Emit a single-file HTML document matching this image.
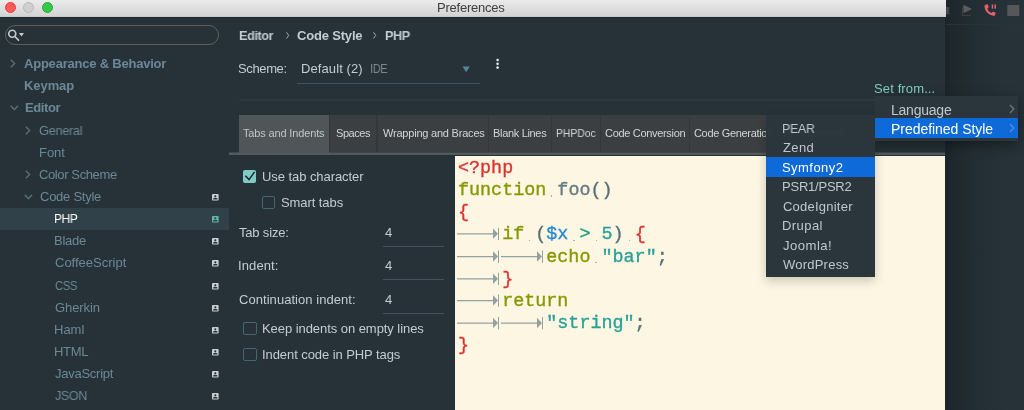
<!DOCTYPE html>
<html><head><meta charset="utf-8">
<style>
*{box-sizing:border-box;margin:0;padding:0}
html,body{width:1024px;height:410px;overflow:hidden;background:#263238}
body{font-family:"Liberation Sans",sans-serif;font-size:13px;color:#c3ccd1;position:relative}
.abs{position:absolute}
.x{position:absolute;line-height:16px;white-space:nowrap;will-change:transform}
#ide{left:944.500px;top:0;width:79.500px;height:410px;background:linear-gradient(to right,#1a2429 0,#1f292e 10px,#232e34 30px,#263238 62px)}
#win{left:0;top:0;width:944.500px;height:410px;background:#263238}
#title{left:0;top:0;width:945.700px;height:17.450px;background:linear-gradient(#ebebeb,#d4d4d4 92%,#c6c6c6);box-shadow:0 1px 0.500px #1f2a2f}
.tl{top:1.700px;width:11.200px;height:11.200px;border-radius:50%}
#search{left:4.600px;top:25.100px;width:214.600px;height:20.200px;border:1px solid #615f5d;border-radius:10px}
.ul{height:1px;background:#3f5560}
.tab{top:115px;height:37px;line-height:37px;font-size:11px;letter-spacing:-0.2px;color:#cdcfd0;background:#3c3f41;text-align:center;white-space:nowrap;overflow:hidden}
.cb{width:13.400px;height:12.700px;border:1.200px solid #47656e;border-radius:2px}
#prev{left:455px;top:155.5px;width:489.500px;height:254.5px;background:#fdf6e3;overflow:hidden}
#code{will-change:transform;position:absolute;left:2.5px;top:2.700px;font-family:"Liberation Mono",monospace;font-size:18.4px;line-height:22.150px;white-space:pre;color:#586e75;-webkit-text-stroke:0.35px currentColor}
.w{position:relative}.w:after{content:"";position:absolute;left:5px;bottom:4.500px;width:1.200px;height:1.200px;background:#a9b3b2}
.r{color:#dc322f}.g{color:#859900}.b{color:#268bd2}.c{color:#2aa198}.o{color:#1b9c78}.d{color:#657b83}
.pop{background:#2b363c;box-shadow:0 4px 12px rgba(0,0,0,.4)}
.sel{background:#0e6ad9}
</style></head><body>
<div class="abs" id="ide">
  <svg class="abs" style="left:0;top:0" width="79" height="30" viewBox="0 0 79 30">
    <rect x="1.200" y="7" width="2.400" height="7.400" fill="#4a4e50"/><rect x="3.600" y="7.300" width="1" height="1.400" fill="#44494b"/><rect x="3.600" y="10" width="1" height="1.400" fill="#44494b"/><rect x="3.600" y="12.700" width="1" height="1.400" fill="#44494b"/>
    <path d="M18.500 4.800 L27 9 L18.500 13.200 Z" fill="#5a5d5f"/><path d="M17.500 7.500 V15.500 H26" stroke="#3b4244" stroke-width="1" fill="none"/>
    <path transform="translate(0.400,0.900)" d="M39 4.500 c0 5 4 10 10 10.500 l1.500 -3 l-3 -1.500 l-1.500 1.500 c-2 -1 -3.500 -2.500 -4 -4.500 l1.500 -1.500 l-1.500 -3 z" fill="#e4606a"/>
    <rect x="46.700" y="4.500" width="1.500" height="4.200" fill="#e4606a"/><rect x="49.500" y="4.500" width="1.500" height="4.200" fill="#e4606a"/>
    <rect x="62.300" y="5" width="12" height="11" fill="#555759"/>
    <rect x="1" y="24" width="78" height="1" fill="#2a3334"/>
  </svg>
</div>
<div class="abs" id="win">
<div class="abs" id="title">
  <div class="abs tl" style="left:4.600px;background:#fc5b57;border:0.5px solid #e0443e"></div>
  <div class="abs tl" style="left:23.100px;background:#d0d0d0;border:0.5px solid #b8b8b8"></div>
  <div class="abs tl" style="left:41.600px;background:#34c84a;border:0.5px solid #2aa939"></div>
</div>
<div class="abs" id="search"></div>
<svg class="abs" style="left:7px;top:28px" width="18" height="14" viewBox="0 0 18 14">
  <circle cx="5.250" cy="5.750" r="3.500" fill="none" stroke="#c3c8ca" stroke-width="1.700"/>
  <path d="M7.900 8.500 L11.500 12.100" stroke="#c3c8ca" stroke-width="1.700" stroke-linecap="round"/>
  <path d="M11.900 4.900 h5.100 l-2.550 3.500 z" fill="#c3c8ca"/>
</svg>
<div class="abs" style="left:0;top:208px;width:228.500px;height:22.200px;background:#314149"></div>
<svg class="abs" style="left:10px;top:59.3px" width="6" height="9" viewBox="0 0 6 9"><path d="M0.800 0.700 L4.600 4.500 L0.800 8.300" stroke="#546c78" stroke-width="1.500" fill="none"/></svg>
<svg class="abs" style="left:9.7px;top:105.3px" width="9" height="6" viewBox="0 0 9 6"><path d="M0.700 0.800 L4.400 4.600 L8.100 0.800" stroke="#546c78" stroke-width="1.500" fill="none"/></svg>
<svg class="abs" style="left:25px;top:125.6px" width="6" height="9" viewBox="0 0 6 9"><path d="M0.800 0.700 L4.600 4.500 L0.800 8.300" stroke="#546c78" stroke-width="1.500" fill="none"/></svg>
<svg class="abs" style="left:25px;top:170px" width="6" height="9" viewBox="0 0 6 9"><path d="M0.800 0.700 L4.600 4.500 L0.800 8.300" stroke="#546c78" stroke-width="1.500" fill="none"/></svg>
<svg class="abs" style="left:24.2px;top:194.2px" width="9" height="6" viewBox="0 0 9 6"><path d="M0.700 0.800 L4.400 4.600 L8.100 0.800" stroke="#546c78" stroke-width="1.500" fill="none"/></svg>
<svg class="abs" style="left:211.500px;top:193.90px" width="7" height="7" viewBox="0 0 7 7"><rect x="0" y="0" width="6.600" height="6.600" rx="0.800" fill="#c9cfd2"/><circle cx="3.300" cy="2.300" r="1.100" fill="#263238"/><path d="M1.100 5.600 V4.900 Q1.100 4 2.200 4 H4.400 Q5.500 4 5.500 4.900 V5.600 Z" fill="#263238"/></svg>
<svg class="abs" style="left:211.500px;top:216.05px" width="7" height="7" viewBox="0 0 7 7"><rect x="0" y="0" width="6.600" height="6.600" rx="0.800" fill="#62b5a4"/><circle cx="3.300" cy="2.300" r="1.100" fill="#314149"/><path d="M1.100 5.600 V4.900 Q1.100 4 2.200 4 H4.400 Q5.500 4 5.500 4.900 V5.600 Z" fill="#314149"/></svg>
<svg class="abs" style="left:211.500px;top:238.20px" width="7" height="7" viewBox="0 0 7 7"><rect x="0" y="0" width="6.600" height="6.600" rx="0.800" fill="#c9cfd2"/><circle cx="3.300" cy="2.300" r="1.100" fill="#263238"/><path d="M1.100 5.600 V4.900 Q1.100 4 2.200 4 H4.400 Q5.500 4 5.500 4.900 V5.600 Z" fill="#263238"/></svg>
<svg class="abs" style="left:211.500px;top:260.35px" width="7" height="7" viewBox="0 0 7 7"><rect x="0" y="0" width="6.600" height="6.600" rx="0.800" fill="#c9cfd2"/><circle cx="3.300" cy="2.300" r="1.100" fill="#263238"/><path d="M1.100 5.600 V4.900 Q1.100 4 2.200 4 H4.400 Q5.500 4 5.500 4.900 V5.600 Z" fill="#263238"/></svg>
<svg class="abs" style="left:211.500px;top:282.50px" width="7" height="7" viewBox="0 0 7 7"><rect x="0" y="0" width="6.600" height="6.600" rx="0.800" fill="#c9cfd2"/><circle cx="3.300" cy="2.300" r="1.100" fill="#263238"/><path d="M1.100 5.600 V4.900 Q1.100 4 2.200 4 H4.400 Q5.500 4 5.500 4.900 V5.600 Z" fill="#263238"/></svg>
<svg class="abs" style="left:211.500px;top:304.65px" width="7" height="7" viewBox="0 0 7 7"><rect x="0" y="0" width="6.600" height="6.600" rx="0.800" fill="#c9cfd2"/><circle cx="3.300" cy="2.300" r="1.100" fill="#263238"/><path d="M1.100 5.600 V4.900 Q1.100 4 2.200 4 H4.400 Q5.500 4 5.500 4.900 V5.600 Z" fill="#263238"/></svg>
<svg class="abs" style="left:211.500px;top:326.80px" width="7" height="7" viewBox="0 0 7 7"><rect x="0" y="0" width="6.600" height="6.600" rx="0.800" fill="#c9cfd2"/><circle cx="3.300" cy="2.300" r="1.100" fill="#263238"/><path d="M1.100 5.600 V4.900 Q1.100 4 2.200 4 H4.400 Q5.500 4 5.500 4.900 V5.600 Z" fill="#263238"/></svg>
<svg class="abs" style="left:211.500px;top:348.95px" width="7" height="7" viewBox="0 0 7 7"><rect x="0" y="0" width="6.600" height="6.600" rx="0.800" fill="#c9cfd2"/><circle cx="3.300" cy="2.300" r="1.100" fill="#263238"/><path d="M1.100 5.600 V4.900 Q1.100 4 2.200 4 H4.400 Q5.500 4 5.500 4.900 V5.600 Z" fill="#263238"/></svg>
<svg class="abs" style="left:211.500px;top:371.10px" width="7" height="7" viewBox="0 0 7 7"><rect x="0" y="0" width="6.600" height="6.600" rx="0.800" fill="#c9cfd2"/><circle cx="3.300" cy="2.300" r="1.100" fill="#263238"/><path d="M1.100 5.600 V4.900 Q1.100 4 2.200 4 H4.400 Q5.500 4 5.500 4.900 V5.600 Z" fill="#263238"/></svg>
<svg class="abs" style="left:211.500px;top:393.25px" width="7" height="7" viewBox="0 0 7 7"><rect x="0" y="0" width="6.600" height="6.600" rx="0.800" fill="#c9cfd2"/><circle cx="3.300" cy="2.300" r="1.100" fill="#263238"/><path d="M1.100 5.600 V4.900 Q1.100 4 2.200 4 H4.400 Q5.500 4 5.500 4.900 V5.600 Z" fill="#263238"/></svg>
<svg class="abs" style="left:285.500px;top:32.200px" width="4" height="7" viewBox="0 0 4 7"><path d="M0.500 0.300 L2.700 3.400 L0.500 6.500" stroke="#a3acb1" stroke-width="1" fill="none"/></svg>
<svg class="abs" style="left:372.900px;top:32.200px" width="4" height="7" viewBox="0 0 4 7"><path d="M0.500 0.300 L2.700 3.400 L0.500 6.500" stroke="#a3acb1" stroke-width="1" fill="none"/></svg>
<svg class="abs" style="left:462px;top:66px" width="9" height="7" viewBox="0 0 9 7"><path d="M0.500 0.400 H7.800 L4.150 6.200 Z" fill="#56859a"/></svg>
<div class="abs ul" style="left:297px;top:82.900px;width:183px;height:1.300px"></div>
<svg class="abs" style="left:495px;top:58px" width="5" height="12" viewBox="0 0 5 12"><circle cx="2.600" cy="2.050" r="1.300" fill="#e6e9ea"/><circle cx="2.600" cy="5.850" r="1.300" fill="#e6e9ea"/><circle cx="2.600" cy="9.600" r="1.300" fill="#e6e9ea"/></svg>
<div class="abs" style="left:239px;top:99.300px;width:706px;height:1.300px;background:#2b393f"></div>

<div class="abs" style="left:229px;top:152px;width:716px;height:1px;background:#3d4649"></div><div class="abs" style="left:229px;top:153px;width:716px;height:2px;background:#525a5d"></div>
<div class="abs" style="left:239px;top:115px;width:610px;height:37px;background:#33383a"></div>
<div class="abs tab" style="left:239px;width:89.800px;background:#505557;height:38px"></div>
<div class="abs tab" style="left:330px;width:46.300px"></div>
<div class="abs tab" style="left:377.800px;width:110.400px"></div>
<div class="abs tab" style="left:489px;width:62px"></div>
<div class="abs tab" style="left:552px;width:48px"></div>
<div class="abs tab" style="left:601px;width:88px"></div>
<div class="abs tab" style="left:690px;width:88px"></div>
<div class="abs tab" style="left:779px;width:70px"></div>


<div class="abs cb" style="left:243.300px;top:170.200px;width:13.200px;height:12.400px;background:#80cbc4;border-color:#80cbc4;border-radius:1.500px"></div>
<svg class="abs" style="left:243.400px;top:170.300px" width="14" height="13" viewBox="0 0 14 13"><path d="M2.400 5.800 L6 9.600 L11.600 1.900" stroke="#1e272c" stroke-width="1.500" fill="none"/></svg>
<div class="abs cb" style="left:261.700px;top:196px"></div>
<div class="abs ul" style="left:383px;top:245.600px;width:61px;height:1.300px"></div>
<div class="abs ul" style="left:383px;top:279.100px;width:61px;height:1.300px"></div>
<div class="abs ul" style="left:383px;top:312.600px;width:61px;height:1.300px"></div>
<div class="abs cb" style="left:243.300px;top:321.900px"></div>
<div class="abs cb" style="left:243.300px;top:348px"></div>

<div class="abs" id="prev">
<div id="code"><span class="r">&lt;?php</span>
<span class="g">function</span><span class="w"> </span><span class="d">foo</span>()
<span class="r">{</span>
    <span class="g">if</span><span class="w"> </span>(<span class="b">$x</span><span class="w"> </span><span class="o">&gt;</span><span class="w"> </span><span class="c">5</span>)<span class="w"> </span><span class="r">{</span>
        <span class="g">echo</span><span class="w"> </span><span class="c">"bar"</span>;
    <span class="r">}</span>
    <span class="g">return</span>
        <span class="c">"string"</span>;
<span class="r">}</span></div>
</div>
</div>
<span id="t0" class="x" style="left:242.90px;top:124.70px;font-size:11px;font-weight:normal;color:#c0c4c6;letter-spacing:-0.150px">Tabs and Indents</span>
<span id="t1" class="x" style="left:335.50px;top:124.70px;font-size:11px;font-weight:normal;color:#d2d4d5;letter-spacing:-0.432px">Spaces</span>
<span id="t2" class="x" style="left:383.00px;top:124.70px;font-size:11px;font-weight:normal;color:#d2d4d5;letter-spacing:-0.210px">Wrapping and Braces</span>
<span id="t3" class="x" style="left:493.04px;top:124.70px;font-size:11px;font-weight:normal;color:#d2d4d5;letter-spacing:-0.324px">Blank Lines</span>
<span id="t4" class="x" style="left:556.30px;top:124.70px;font-size:11px;font-weight:normal;color:#d2d4d5;letter-spacing:-0.018px;transform:scaleX(0.9450);transform-origin:0 50%">PHPDoc</span>
<span id="t5" class="x" style="left:604.60px;top:124.70px;font-size:11px;font-weight:normal;color:#d2d4d5;letter-spacing:-0.315px">Code Conversion</span>
<span id="t6" class="x" style="left:694.10px;top:124.70px;font-size:11px;font-weight:normal;color:#d2d4d5;letter-spacing:-0.330px">Code Generation</span>
<svg class="abs" style="left:455px;top:156px" width="120" height="254" viewBox="0 0 120 254">
<g transform="translate(2,78.3)"><path d="M0 -0.500 H37" stroke="#93a1a1" stroke-width="1.250"/><path d="M36 -5.800 L41 -0.500 L36 4.800 Z" fill="#93a1a1"/><path d="M41.500 -6.500 V5.800" stroke="#93a1a1" stroke-width="1"/></g>
<g transform="translate(2,101)"><path d="M0 -0.500 H37" stroke="#93a1a1" stroke-width="1.250"/><path d="M36 -5.800 L41 -0.500 L36 4.800 Z" fill="#93a1a1"/><path d="M41.500 -6.500 V5.800" stroke="#93a1a1" stroke-width="1"/></g>
<g transform="translate(46,101)"><path d="M0 -0.500 H37" stroke="#93a1a1" stroke-width="1.250"/><path d="M36 -5.800 L41 -0.500 L36 4.800 Z" fill="#93a1a1"/><path d="M41.500 -6.500 V5.800" stroke="#93a1a1" stroke-width="1"/></g>
<g transform="translate(2,123.25)"><path d="M0 -0.500 H37" stroke="#93a1a1" stroke-width="1.250"/><path d="M36 -5.800 L41 -0.500 L36 4.800 Z" fill="#93a1a1"/><path d="M41.500 -6.500 V5.800" stroke="#93a1a1" stroke-width="1"/></g>
<g transform="translate(2,145)"><path d="M0 -0.500 H37" stroke="#93a1a1" stroke-width="1.250"/><path d="M36 -5.800 L41 -0.500 L36 4.800 Z" fill="#93a1a1"/><path d="M41.500 -6.500 V5.800" stroke="#93a1a1" stroke-width="1"/></g>
<g transform="translate(2,167.5)"><path d="M0 -0.500 H37" stroke="#93a1a1" stroke-width="1.250"/><path d="M36 -5.800 L41 -0.500 L36 4.800 Z" fill="#93a1a1"/><path d="M41.500 -6.500 V5.800" stroke="#93a1a1" stroke-width="1"/></g>
<g transform="translate(46,167.5)"><path d="M0 -0.500 H37" stroke="#93a1a1" stroke-width="1.250"/><path d="M36 -5.800 L41 -0.500 L36 4.800 Z" fill="#93a1a1"/><path d="M41.500 -6.500 V5.800" stroke="#93a1a1" stroke-width="1"/></g>
</svg>
<div class="abs" style="left:746px;top:95px;width:160px;height:215px">
<div class="abs pop" style="left:20px;top:20px;width:109.200px;height:162.200px;box-shadow:0 4px 10px rgba(0,0,0,.2)">
  <div class="abs" style="left:1.500px;top:12px;font-size:11px;color:#2f3a40;letter-spacing:-0.2px;white-space:nowrap">n</div><div class="abs" style="left:17.500px;top:12px;font-size:11px;color:#303b41;letter-spacing:-0.2px;white-space:nowrap">Arrangement</div>
  <div class="abs sel" style="left:0;top:42.100px;width:109px;height:19.700px"></div>
</div></div>
<div class="abs" style="left:875px;top:75px;width:149px;height:95px;overflow:hidden">
<div class="abs pop" style="left:0;top:20.500px;width:143px;height:45.500px">
  <div class="abs sel" style="left:0;top:22.500px;width:143px;height:19.500px"></div>
  <svg style="position:absolute;left:134px;top:8.500px" width="6" height="10" viewBox="0 0 6 10"><path d="M1 1 L4.800 5 L1 9" stroke="#6a777d" stroke-width="1.300" fill="none"/></svg>
  <svg style="position:absolute;left:134px;top:27.500px" width="6" height="10" viewBox="0 0 6 10"><path d="M1 1 L4.800 5 L1 9" stroke="#4f90ea" stroke-width="1.300" fill="none"/></svg>
</div></div>
<span id="sb0" class="x" style="left:23.70px;top:56.10px;font-size:13px;font-weight:bold;color:#6c8896;letter-spacing:-0.216px">Appearance &amp; Behavior</span>
<span id="sb1" class="x" style="left:24.22px;top:78.25px;font-size:13px;font-weight:bold;color:#6c8896;letter-spacing:-0.072px">Keymap</span>
<span id="sb2" class="x" style="left:24.78px;top:100.40px;font-size:13px;font-weight:bold;color:#6c8896;letter-spacing:-0.414px">Editor</span>
<span id="sb3" class="x" style="left:39.28px;top:122.55px;font-size:13px;font-weight:normal;color:#6c8896;letter-spacing:-0.315px;transform:scaleX(0.9825);transform-origin:0 50%">General</span>
<span id="sb4" class="x" style="left:39.04px;top:144.70px;font-size:13px;font-weight:normal;color:#6c8896;letter-spacing:-0.060px">Font</span>
<span id="sb5" class="x" style="left:39.28px;top:166.85px;font-size:13px;font-weight:normal;color:#6c8896;letter-spacing:-0.385px">Color Scheme</span>
<span id="sb6" class="x" style="left:39.60px;top:189.00px;font-size:13px;font-weight:normal;color:#6c8896;letter-spacing:-0.250px">Code Style</span>
<span id="sb7" class="x" style="left:54.30px;top:211.15px;font-size:13px;font-weight:normal;color:#ffffff;letter-spacing:-0.450px;transform:scaleX(0.9178);transform-origin:0 50%">PHP</span>
<span id="sb8" class="x" style="left:54.30px;top:233.30px;font-size:13px;font-weight:normal;color:#6c8896;letter-spacing:-0.225px">Blade</span>
<span id="sb9" class="x" style="left:55.10px;top:255.45px;font-size:13px;font-weight:normal;color:#6c8896;letter-spacing:0.000px">CoffeeScript</span>
<span id="sb10" class="x" style="left:55.10px;top:277.60px;font-size:13px;font-weight:normal;color:#6c8896;letter-spacing:-0.450px;transform:scaleX(0.8624);transform-origin:0 50%">CSS</span>
<span id="sb11" class="x" style="left:54.56px;top:299.75px;font-size:13px;font-weight:normal;color:#6c8896;letter-spacing:-0.090px">Gherkin</span>
<span id="sb12" class="x" style="left:54.00px;top:321.90px;font-size:13px;font-weight:normal;color:#6c8896;letter-spacing:0.000px">Haml</span>
<span id="sb13" class="x" style="left:54.00px;top:344.05px;font-size:13px;font-weight:normal;color:#6c8896;letter-spacing:-0.270px">HTML</span>
<span id="sb14" class="x" style="left:54.56px;top:366.20px;font-size:13px;font-weight:normal;color:#6c8896;letter-spacing:-0.260px">JavaScript</span>
<span id="sb15" class="x" style="left:54.56px;top:388.35px;font-size:13px;font-weight:normal;color:#6c8896;letter-spacing:-0.450px;transform:scaleX(0.9703);transform-origin:0 50%">JSON</span>
<span id="bc0" class="x" style="left:239.28px;top:28.00px;font-size:13px;font-weight:bold;color:#c3ccd1;letter-spacing:-0.450px;transform:scaleX(0.9786);transform-origin:0 50%">Editor</span>
<span id="bc1" class="x" style="left:297.28px;top:28.00px;font-size:13px;font-weight:bold;color:#c3ccd1;letter-spacing:-0.180px">Code Style</span>
<span id="bc2" class="x" style="left:384.60px;top:28.00px;font-size:13px;font-weight:bold;color:#c3ccd1;letter-spacing:-0.450px;transform:scaleX(0.9704);transform-origin:0 50%">PHP</span>
<span id="sch" class="x" style="left:238.40px;top:61.00px;font-size:13px;font-weight:normal;color:#c3ccd1;letter-spacing:-0.375px">Scheme:</span>
<span id="def" class="x" style="left:301.40px;top:61.00px;font-size:13px;font-weight:normal;color:#c3ccd1;letter-spacing:0.099px">Default (2)</span>
<span id="idl" class="x" style="left:370.00px;top:60.80px;font-size:12px;font-weight:normal;color:#7d888d;letter-spacing:-0.450px;transform:scaleX(0.9263);transform-origin:0 50%">IDE</span>
<span id="setf" class="x" style="left:873.86px;top:80.70px;font-size:13px;font-weight:normal;color:#7fc9b9;letter-spacing:0.126px">Set from...</span>
<span id="f0" class="x" style="left:262.04px;top:169.30px;font-size:13px;font-weight:normal;color:#c3ccd1;letter-spacing:-0.067px">Use tab character</span>
<span id="f1" class="x" style="left:281.38px;top:195.30px;font-size:13px;font-weight:normal;color:#c3ccd1;letter-spacing:-0.080px">Smart tabs</span>
<span id="f2" class="x" style="left:239.46px;top:225.00px;font-size:13px;font-weight:normal;color:#c3ccd1;letter-spacing:-0.180px">Tab size:</span>
<span id="f2v" class="x" style="left:384.92px;top:225.00px;font-size:13px;font-weight:normal;color:#c3ccd1;letter-spacing:0.000px">4</span>
<span id="f3" class="x" style="left:237.86px;top:258.30px;font-size:13px;font-weight:normal;color:#c3ccd1;letter-spacing:0.105px">Indent:</span>
<span id="f3v" class="x" style="left:384.92px;top:258.30px;font-size:13px;font-weight:normal;color:#c3ccd1;letter-spacing:0.000px">4</span>
<span id="f4" class="x" style="left:238.50px;top:291.50px;font-size:13px;font-weight:normal;color:#c3ccd1;letter-spacing:0.052px">Continuation indent:</span>
<span id="f4v" class="x" style="left:384.92px;top:291.50px;font-size:13px;font-weight:normal;color:#c3ccd1;letter-spacing:0.000px">4</span>
<span id="f5" class="x" style="left:262.04px;top:321.30px;font-size:13px;font-weight:normal;color:#c3ccd1;letter-spacing:-0.056px">Keep indents on empty lines</span>
<span id="f6" class="x" style="left:262.04px;top:347.20px;font-size:13px;font-weight:normal;color:#c3ccd1;letter-spacing:-0.074px">Indent code in PHP tags</span>
<span id="ttl" class="x" style="left:436.78px;top:0.00px;font-size:13px;font-weight:normal;color:#3f3f3f;letter-spacing:-0.234px">Preferences</span>
<span id="m0" class="x" style="left:782.30px;top:120.80px;font-size:13px;font-weight:normal;color:#bfc7cb;letter-spacing:-0.270px;transform:scaleX(0.9506);transform-origin:0 50%">PEAR</span>
<span id="m1" class="x" style="left:783.10px;top:140.30px;font-size:13px;font-weight:normal;color:#bfc7cb;letter-spacing:0.360px">Zend</span>
<span id="m2" class="x" style="left:782.30px;top:159.80px;font-size:13px;font-weight:normal;color:#ffffff;letter-spacing:0.450px">Symfony2</span>
<span id="m3" class="x" style="left:782.30px;top:179.20px;font-size:13px;font-weight:normal;color:#bfc7cb;letter-spacing:-0.226px">PSR1/PSR2</span>
<span id="m4" class="x" style="left:783.10px;top:198.70px;font-size:13px;font-weight:normal;color:#bfc7cb;letter-spacing:0.225px">CodeIgniter</span>
<span id="m5" class="x" style="left:782.30px;top:218.20px;font-size:13px;font-weight:normal;color:#bfc7cb;letter-spacing:0.432px">Drupal</span>
<span id="m6" class="x" style="left:783.10px;top:237.70px;font-size:13px;font-weight:normal;color:#bfc7cb;letter-spacing:0.450px;transform:scaleX(1.0089);transform-origin:0 50%">Joomla!</span>
<span id="m7" class="x" style="left:783.10px;top:257.20px;font-size:13px;font-weight:normal;color:#bfc7cb;letter-spacing:0.225px">WordPress</span>
<span id="p0" class="x" style="left:890.86px;top:101.70px;font-size:14px;font-weight:normal;color:#bfc7cb;letter-spacing:-0.231px">Language</span>
<span id="p1" class="x" style="left:890.86px;top:121.30px;font-size:14px;font-weight:normal;color:#ffffff;letter-spacing:-0.042px">Predefined Style</span>
</body></html>
